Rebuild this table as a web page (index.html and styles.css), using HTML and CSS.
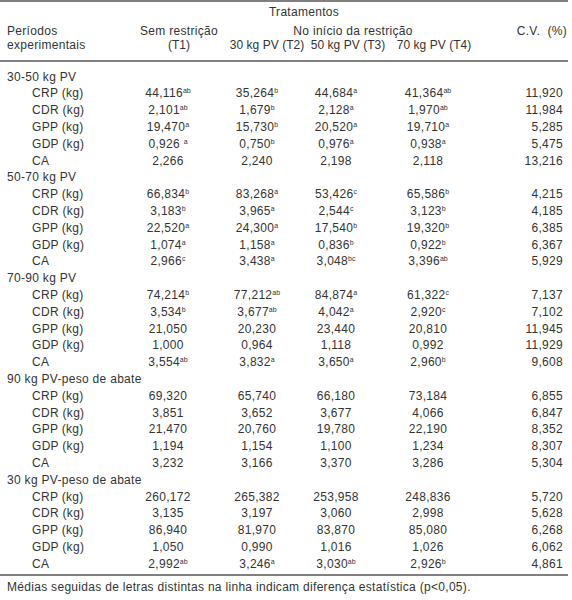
FILE: index.html
```html
<!DOCTYPE html>
<html lang="pt">
<head>
<meta charset="utf-8">
<title>Tabela</title>
<link rel="stylesheet" href="styles.css">
</head>
<body>
<table class="tbl">
<colgroup>
<col class="c0"><col class="c1"><col class="c2"><col class="c3"><col class="c4"><col class="c5">
</colgroup>
<thead>
<tr class="h1"><th></th><th colspan="4" class="ctr">Tratamentos</th><th></th></tr>
<tr class="h2"><th class="lab" rowspan="2">Períodos<br>experimentais</th><th class="ctr">Sem restrição</th><th colspan="3" class="ctr">No início da restrição</th><th class="cv">C.V.&nbsp; (%)</th></tr>
<tr class="h3"><th class="ctr">(T1)</th><th class="ctr">30 kg PV (T2)</th><th class="ctr">50 kg PV (T3)</th><th class="ctr">70 kg PV (T4)</th><th></th></tr>
</thead>
<tbody>
<tr class="first"><td class="sec" colspan="6">30-50 kg PV</td></tr>
<tr><td class="sub">CRP (kg)</td><td class="v1">44,116<sup>ab</sup></td><td class="v2">35,264<sup>b</sup></td><td class="v3">44,684<sup>a</sup></td><td class="v4">41,364<sup>ab</sup></td><td class="cv">11,920</td></tr>
<tr><td class="sub">CDR (kg)</td><td class="v1">2,101<sup>ab</sup></td><td class="v2">1,679<sup>b</sup></td><td class="v3">2,128<sup>a</sup></td><td class="v4">1,970<sup>ab</sup></td><td class="cv">11,984</td></tr>
<tr><td class="sub">GPP (kg)</td><td class="v1">19,470<sup>a</sup></td><td class="v2">15,730<sup>b</sup></td><td class="v3">20,520<sup>a</sup></td><td class="v4">19,710<sup>a</sup></td><td class="cv">5,285</td></tr>
<tr><td class="sub">GDP (kg)</td><td class="v1">0,926 <sup>a</sup></td><td class="v2">0,750<sup>b</sup></td><td class="v3">0,976<sup>a</sup></td><td class="v4">0,938<sup>a</sup></td><td class="cv">5,475</td></tr>
<tr><td class="sub">CA</td><td class="v1">2,266</td><td class="v2">2,240</td><td class="v3">2,198</td><td class="v4">2,118</td><td class="cv">13,216</td></tr>
<tr><td class="sec" colspan="6">50-70 kg PV</td></tr>
<tr><td class="sub">CRP (kg)</td><td class="v1">66,834<sup>b</sup></td><td class="v2">83,268<sup>a</sup></td><td class="v3">53,426<sup>c</sup></td><td class="v4">65,586<sup>b</sup></td><td class="cv">4,215</td></tr>
<tr><td class="sub">CDR (kg)</td><td class="v1">3,183<sup>b</sup></td><td class="v2">3,965<sup>a</sup></td><td class="v3">2,544<sup>c</sup></td><td class="v4">3,123<sup>b</sup></td><td class="cv">4,185</td></tr>
<tr><td class="sub">GPP (kg)</td><td class="v1">22,520<sup>a</sup></td><td class="v2">24,300<sup>a</sup></td><td class="v3">17,540<sup>b</sup></td><td class="v4">19,320<sup>b</sup></td><td class="cv">6,385</td></tr>
<tr><td class="sub">GDP (kg)</td><td class="v1">1,074<sup>a</sup></td><td class="v2">1,158<sup>a</sup></td><td class="v3">0,836<sup>b</sup></td><td class="v4">0,922<sup>b</sup></td><td class="cv">6,367</td></tr>
<tr><td class="sub">CA</td><td class="v1">2,966<sup>c</sup></td><td class="v2">3,438<sup>a</sup></td><td class="v3">3,048<sup>bc</sup></td><td class="v4">3,396<sup>ab</sup></td><td class="cv">5,929</td></tr>
<tr><td class="sec" colspan="6">70-90 kg PV</td></tr>
<tr><td class="sub">CRP (kg)</td><td class="v1">74,214<sup>b</sup></td><td class="v2">77,212<sup>ab</sup></td><td class="v3">84,874<sup>a</sup></td><td class="v4">61,322<sup>c</sup></td><td class="cv">7,137</td></tr>
<tr><td class="sub">CDR (kg)</td><td class="v1">3,534<sup>b</sup></td><td class="v2">3,677<sup>ab</sup></td><td class="v3">4,042<sup>a</sup></td><td class="v4">2,920<sup>c</sup></td><td class="cv">7,102</td></tr>
<tr><td class="sub">GPP (kg)</td><td class="v1">21,050</td><td class="v2">20,230</td><td class="v3">23,440</td><td class="v4">20,810</td><td class="cv">11,945</td></tr>
<tr><td class="sub">GDP (kg)</td><td class="v1">1,000</td><td class="v2">0,964</td><td class="v3">1,118</td><td class="v4">0,992</td><td class="cv">11,929</td></tr>
<tr><td class="sub">CA</td><td class="v1">3,554<sup>ab</sup></td><td class="v2">3,832<sup>a</sup></td><td class="v3">3,650<sup>a</sup></td><td class="v4">2,960<sup>b</sup></td><td class="cv">9,608</td></tr>
<tr><td class="sec" colspan="6">90 kg PV-peso de abate</td></tr>
<tr><td class="sub">CRP (kg)</td><td class="v1">69,320</td><td class="v2">65,740</td><td class="v3">66,180</td><td class="v4">73,184</td><td class="cv">6,855</td></tr>
<tr><td class="sub">CDR (kg)</td><td class="v1">3,851</td><td class="v2">3,652</td><td class="v3">3,677</td><td class="v4">4,066</td><td class="cv">6,847</td></tr>
<tr><td class="sub">GPP (kg)</td><td class="v1">21,470</td><td class="v2">20,760</td><td class="v3">19,780</td><td class="v4">22,190</td><td class="cv">8,352</td></tr>
<tr><td class="sub">GDP (kg)</td><td class="v1">1,194</td><td class="v2">1,154</td><td class="v3">1,100</td><td class="v4">1,234</td><td class="cv">8,307</td></tr>
<tr><td class="sub">CA</td><td class="v1">3,232</td><td class="v2">3,166</td><td class="v3">3,370</td><td class="v4">3,286</td><td class="cv">5,304</td></tr>
<tr><td class="sec" colspan="6">30 kg PV-peso de abate</td></tr>
<tr><td class="sub">CRP (kg)</td><td class="v1">260,172</td><td class="v2">265,382</td><td class="v3">253,958</td><td class="v4">248,836</td><td class="cv">5,720</td></tr>
<tr><td class="sub">CDR (kg)</td><td class="v1">3,135</td><td class="v2">3,197</td><td class="v3">3,060</td><td class="v4">2,998</td><td class="cv">5,628</td></tr>
<tr><td class="sub">GPP (kg)</td><td class="v1">86,940</td><td class="v2">81,970</td><td class="v3">83,870</td><td class="v4">85,080</td><td class="cv">6,268</td></tr>
<tr><td class="sub">GDP (kg)</td><td class="v1">1,050</td><td class="v2">0,990</td><td class="v3">1,016</td><td class="v4">1,026</td><td class="cv">6,062</td></tr>
<tr class="last"><td class="sub">CA</td><td class="v1">2,992<sup>ab</sup></td><td class="v2">3,246<sup>a</sup></td><td class="v3">3,030<sup>ab</sup></td><td class="v4">2,926<sup>b</sup></td><td class="cv">4,861</td></tr>
</tbody>
</table>
<p class="note">Médias seguidas de letras distintas na linha indicam diferença estatística (p&lt;0,05).</p>
</body>
</html>
```
FILE: styles.css
```css
html, body {
  margin: 0;
  padding: 0;
  background: #ffffff;
}
body {
  font-family: "Liberation Sans", Arial, sans-serif;
  font-size: 12px;
  letter-spacing: 0.3px;
  color: #333333;
}
.tbl {
  border-collapse: collapse;
  table-layout: fixed;
  width: 568px;
  border-top: 2px solid #808080;
  border-bottom: 2px solid #808080;
}
.c0 { width: 130px; }
.c1 { width: 98px; }
.c2 { width: 78px; }
.c3 { width: 84px; }
.c4 { width: 88px; }
.c5 { width: 90px; }
th, td {
  padding: 0;
  font-weight: normal;
  white-space: nowrap;
}
thead th { line-height: 14px; vertical-align: top; }
.h1 th { height: 21px; padding-top: 3px; box-sizing: border-box; }
.h2 th { padding-top: 2px; }
.h3 th { padding-bottom: 8px; border-bottom: 2px solid #808080; letter-spacing: 0.05px; }
thead .lab { text-align: left; padding-left: 7px; border-bottom: 2px solid #808080; padding-top: 2px; }
.ctr { text-align: center; }
th.cv { text-align: right; padding-right: 1px; }
tbody td { line-height: 16.8px; height: 16.8px; }
.first td { padding-top: 6.6px; }
.last td { padding-bottom: 1px; }
.sec { text-align: left; padding-left: 7px; }
.sub { text-align: left; padding-left: 32px; }
.v1 { text-align: center; padding-right: 22px; }
.v2 { text-align: center; padding-right: 20px; }
.v3 { text-align: center; padding-right: 24px; }
.v4 { text-align: center; padding-right: 12px; }
td.cv { text-align: right; padding-right: 5px; }
sup {
  font-size: 7px;
  line-height: 0;
  vertical-align: 4px;
  letter-spacing: 0;
}
.note {
  margin: 4px 0 0 0;
  padding-left: 7px;
  line-height: 14px;
}
```
